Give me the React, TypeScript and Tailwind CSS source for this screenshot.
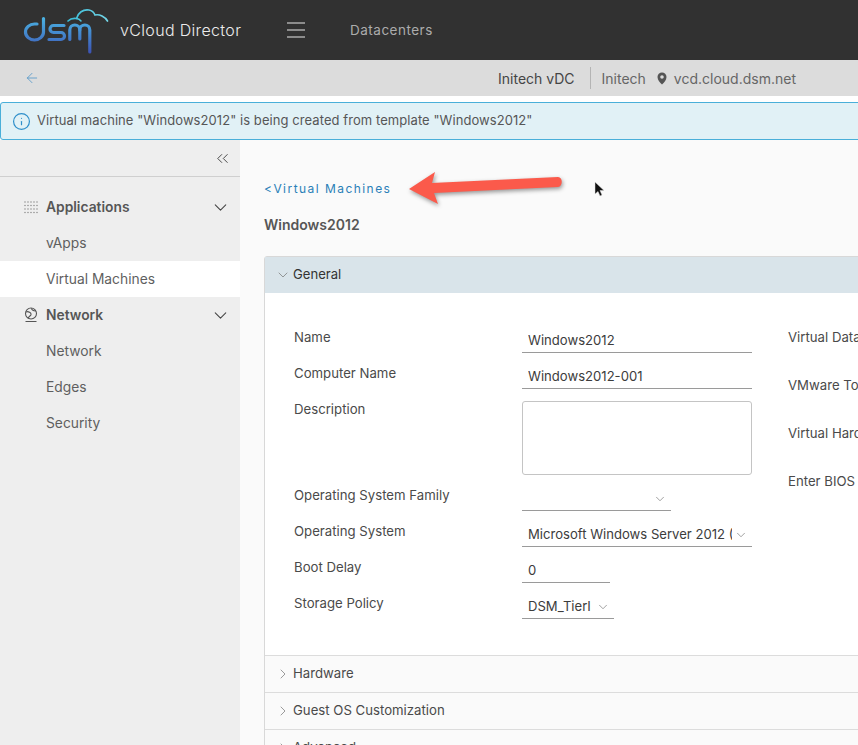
import React from "react";
import { ChevronDown, ChevronRight, ChevronsLeft, ArrowLeft, Info } from "lucide-react";

const font = { fontFamily: '"Inter", "Noto Sans", sans-serif' };

function Logo() {
  return (
    <svg width="112" height="56" viewBox="0 0 112 56" fill="none" className="absolute left-0 top-0">
      <defs>
        <linearGradient id="lg" x1="0" y1="18" x2="0" y2="54" gradientUnits="userSpaceOnUse">
          <stop offset="0" stopColor="#4ab2e2" />
          <stop offset="1" stopColor="#3c50b2" />
        </linearGradient>
        <linearGradient id="lc" x1="68" y1="0" x2="108" y2="0" gradientUnits="userSpaceOnUse">
          <stop offset="0" stopColor="#38bcd8" />
          <stop offset="1" stopColor="#74d6e8" />
        </linearGradient>
      </defs>
      <g stroke="url(#lg)" strokeWidth="3.200" strokeLinecap="round" strokeLinejoin="round">
        <path d="M43.500 18.500V32a9 8 0 1 1-9-8h2.500" />
        <path d="M64 25.500H53.500a3.400 3.400 0 0 0 0 7h7.500a3.400 3.400 0 0 1 0 7H49" />
        <path d="M69.800 39.500V30a5 5 0 0 1 10 0V39" />
        <path d="M79.800 30a5 5 0 0 1 10 0V52" />
      </g>
      <path d="M68 21c2-2 5-3 8.500-2.500C78 13 83 9 89 10c3 .5 5 2.500 6 5 4.500-1 10 1.500 12.500 6" stroke="url(#lc)" strokeWidth="1.700" strokeLinecap="round" />
      <path d="M76.500 18.500c2 .2 3.500 1.200 4.500 2.500" stroke="url(#lc)" strokeWidth="1.500" strokeLinecap="round" />
    </svg>
  );
}

function NavItem({ label, active }: { label: string; active?: boolean }) {
  return (
    <div className={`h-9 flex items-center pl-[46px] text-[13.8px] text-[#5f5f5f] ${active ? "bg-white" : ""}`}>
      {label}
    </div>
  );
}

function NavGroup({ label, icon }: { label: string; icon: React.ReactNode }) {
  return (
    <div className="h-9 flex items-center pl-[24px] pr-[9px] text-[13.8px] font-semibold text-[#565656]">
      <span className="w-[22px] flex items-center">{icon}</span>
      <span className="flex-1">{label}</span>
      <ChevronDown size={21} strokeWidth={1.200} className="text-[#444]" />
    </div>
  );
}

function Underlined({ w, value, chevron }: { w: string; value: string; chevron?: boolean }) {
  return (
    <div className={`${w} h-[24px] border-b border-[#9a9a9a] flex items-center pl-[6px] pr-[4px] text-[13.100px] text-[#3c3c3c] overflow-hidden whitespace-nowrap`}>
      <span className="flex-1 overflow-hidden">{value}</span>
      {chevron && <ChevronDown size={14} strokeWidth={1.200} className="text-[#7a7a7a] ml-[2px] shrink-0" />}
    </div>
  );
}

function FormRow({ label, children, h = "h-9" }: { label: string; children: React.ReactNode; h?: string }) {
  return (
    <div className={`${h} flex items-start`}>
      <div className="w-[228px] h-[29px] flex items-center text-[13.200px] text-[#4a4a4a]">{label}</div>
      <div className="pt-[6px]">{children}</div>
    </div>
  );
}

function Section({ label }: { label: string }) {
  return (
    <div className="h-[37px] shrink-0 border-b border-[#dcdcdc] bg-[#fafafa] flex items-center pl-[10px] text-[13.200px] text-[#4a4a4a]">
      <ChevronRight size={16} strokeWidth={1.100} className="text-[#777] mr-[2px]" />
      {label}
    </div>
  );
}

export default function App() {
  return (
    <div className="relative w-[858px] h-[745px] overflow-hidden bg-white flex flex-col" style={font}>
      <header className="relative h-[60px] shrink-0 bg-[#313131] flex items-center pl-[120px]">
        <Logo />
        <span className="text-[16px] font-light text-[#ececec] w-[167px] tracking-[0.340px]">vCloud Director</span>
        <div className="w-[18px] flex flex-col gap-[5px] mr-[45px]">
          <span className="h-[2px] bg-[#8c8c8c]" />
          <span className="h-[2px] bg-[#8c8c8c]" />
          <span className="h-[2px] bg-[#8c8c8c]" />
        </div>
        <span className="text-[13.500px] text-[#acacac] tracking-[0.500px]">Datacenters</span>
      </header>

      <div className="h-9 shrink-0 bg-[#dcdcdc] flex items-center pl-[24px] pr-[62px] text-[14px]">
        <ArrowLeft size={16} strokeWidth={1.200} className="text-[#4f94c8]" />
        <span className="ml-auto text-[#454545]">Initech vDC</span>
        <span className="w-px h-[22px] bg-[#b4b4b4] ml-[15px] mr-[11px]" />
        <span className="text-[#666]">Initech</span>
        <svg width="10" height="13" viewBox="0 0 10 13" className="ml-[11px] mr-[7px]">
          <path fillRule="evenodd" d="M5 .5a4.500 4.500 0 0 1 4.500 4.500C9.500 8 7 10.500 5 12.500 3 10.500.5 8 .5 5A4.500 4.500 0 0 1 5 .5Zm0 2.700a1.800 1.800 0 1 0 0 3.600 1.800 1.800 0 0 0 0-3.600Z" fill="#555" />
        </svg>
        <span className="text-[#666]">vcd.cloud.dsm.net</span>
      </div>

      <div className="h-[6px] shrink-0 bg-white" />
      <div className="h-[38px] shrink-0 mr-[-12px] bg-[#e1f1f6] border border-[#49afd9] rounded-[3px] flex items-center pl-[11px] text-[13px] tracking-[0.070px] text-[#565656]">
        <Info size={19} strokeWidth={1.500} className="text-[#2f8fca] mr-[6px]" />
        Virtual machine "Windows2012" is being created from template "Windows2012"
      </div>

      <div className="flex-1 flex min-h-0">
        <aside className="w-[240px] shrink-0 bg-[#eeeeee]">
          <div className="h-[37px] border-b border-[#cfcfcf] flex items-center justify-end pr-[8px]">
            <ChevronsLeft size={19} strokeWidth={1.100} className="text-[#333]" />
          </div>
          <div className="pt-[12px]">
            <NavGroup
              label="Applications"
              icon={
                <svg width="14" height="13" viewBox="0 0 14 13" fill="#808080">
                  {[1, 4.500, 8, 11.500].map((y) =>
                    [1, 4, 7, 10, 13].map((x) => <circle key={`${x}-${y}`} cx={x} cy={y} r="0.700" />)
                  )}
                </svg>
              }
            />
            <NavItem label="vApps" />
            <NavItem label="Virtual Machines" active />
            <NavGroup
              label="Network"
              icon={
                <svg width="14" height="16" viewBox="0 0 14 16" fill="none" stroke="#555" strokeWidth="1.100">
                  <circle cx="7" cy="6.500" r="5.500" />
                  <path d="M2 5c2-1 3 0 4 .5s1.500 2 .5 3-2 1-2.500 3M7.500 1.200c0 2 1.500 2.500 4.500 2.800M1.500 14.500h11" />
                </svg>
              }
            />
            <NavItem label="Network" />
            <NavItem label="Edges" />
            <NavItem label="Security" />
          </div>
        </aside>

        <main className="flex-1 min-w-0 bg-[#fafafa] pl-[24px] overflow-hidden">
          <div className="h-[36px] mt-[31px] flex items-center text-[12px] tracking-[1.450px] text-[#2a7fb8]">
            &lt;Virtual Machines
          </div>
          <div className="h-[36px] mt-[-1px] flex items-center text-[14px] font-semibold text-[#565656]">Windows2012</div>
          <div className="mt-[14px] w-[700px] border border-[#d8d8d8] rounded-t-[3px] flex flex-col">
            <div className="h-[36px] shrink-0 bg-[#d9e4ea] flex items-center pl-[10px] text-[13.100px] text-[#333]">
              <ChevronDown size={16} strokeWidth={1.100} className="text-[#777] mr-[2px]" />
              General
            </div>
            <div className="h-[363px] shrink-0 bg-white border-b border-[#dcdcdc] pt-[30px] pl-[29px] flex">
              <div className="w-[494px] shrink-0">
                <FormRow label="Name"><Underlined w="w-[230px]" value="Windows2012" /></FormRow>
                <FormRow label="Computer Name"><Underlined w="w-[230px]" value="Windows2012-001" /></FormRow>
                <FormRow label="Description" h="h-[86px]">
                  <div className="w-[230px] h-[74px] border border-[#c4c4c4] rounded-[3px] bg-white" />
                </FormRow>
                <FormRow label="Operating System Family"><Underlined w="w-[149px]" value="" chevron /></FormRow>
                <FormRow label="Operating System"><Underlined w="w-[230px]" value="Microsoft Windows Server 2012 (" chevron /></FormRow>
                <FormRow label="Boot Delay"><Underlined w="w-[88px]" value="0" /></FormRow>
                <FormRow label="Storage Policy"><Underlined w="w-[92px]" value="DSM_TierI" chevron /></FormRow>
              </div>
              <div className="text-[13.200px] text-[#4a4a4a] whitespace-nowrap">
                <div className="h-[48px] pt-[5px]">Virtual Data</div>
                <div className="h-[48px] pt-[5px]">VMware To</div>
                <div className="h-[48px] pt-[5px]">Virtual Hard</div>
                <div className="h-[48px] pt-[5px]">Enter BIOS</div>
              </div>
            </div>
            <Section label="Hardware" />
            <Section label="Guest OS Customization" />
            <Section label="Advanced" />
          </div>
        </main>
      </div>

      <svg width="180" height="50" viewBox="0 0 180 50" className="absolute left-[400px] top-[165px] drop-shadow-[1px_2px_2px_rgba(0,0,0,0.4)]" fill="none">
        <path d="M9 24 35 7l-3 11 126-6c5 0 5 9 0 10L34 28l4 11Z" fill="#fb5a4b" />
      </svg>

      <svg width="12" height="18" viewBox="0 0 12 18" className="absolute left-[594px] top-[181px]">
        <path d="M1 1v12l3-2.500 2 4.500 2-1-2-4.500h4Z" fill="#111" stroke="#ddd" strokeWidth="0.500" />
      </svg>
    </div>
  );
}
